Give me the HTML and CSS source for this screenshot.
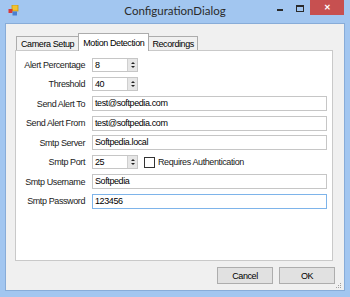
FILE: index.html
```html
<!DOCTYPE html>
<html lang="en">
<head>
    <meta charset="UTF-8">
    <title>ConfigurationDialog</title>
    <link rel="stylesheet" href="styles.css">
</head>
<body>
    <div class="window">
        <div class="titlebar">
            <div class="app-icon">
                <svg width="11" height="11" viewBox="0 0 11 11">
                    <rect x="4" y="0" width="6" height="6" fill="#f2c230" stroke="#c89a10" stroke-width="0.8"/>
                    <rect x="0.5" y="4" width="4" height="4" fill="#d83a3a"/>
                    <rect x="4.5" y="6.5" width="4.5" height="4" fill="#4a7fd0"/>
                </svg>
            </div>
            <div class="title">ConfigurationDialog</div>
            <div class="controls">
                <span class="btn-min"></span>
                <span class="btn-max"></span>
                <span class="btn-close">&#x2715;</span>
            </div>
        </div>

        <div class="client">
            <div class="tabs">
                <div class="tab first">Camera Setup</div>
                <div class="tab active">Motion Detection</div>
                <div class="tab">Recordings</div>
            </div>

            <div class="panel">
                <div class="form">
                    <label>Alert Percentage</label>
                    <div class="spin"><span class="val">8</span><span class="arrows"><i class="up"></i><i class="down"></i></span></div>

                    <label>Threshold</label>
                    <div class="spin"><span class="val">40</span><span class="arrows"><i class="up"></i><i class="down"></i></span></div>

                    <label>Send Alert To</label>
                    <div class="textbox">test@softpedia.com</div>

                    <label>Send Alert From</label>
                    <div class="textbox">test@softpedia.com</div>

                    <label>Smtp Server</label>
                    <div class="textbox">Softpedia.local</div>

                    <label>Smtp Port</label>
                    <div class="port-row">
                        <div class="spin"><span class="val">25</span><span class="arrows"><i class="up"></i><i class="down"></i></span></div>
                        <span class="checkbox"></span>
                        <span class="check-label">Requires Authentication</span>
                    </div>

                    <label>Smtp Username</label>
                    <div class="textbox">Softpedia</div>

                    <label>Smtp Password</label>
                    <div class="textbox focused">123456</div>
                </div>
            </div>

            <div class="buttons">
                <button class="dlg-button">Cancel</button>
                <button class="dlg-button">OK</button>
            </div>

            <svg class="grip" width="6" height="6" viewBox="0 0 6 6">
                <rect x="4" y="0" width="1" height="1" fill="#a0a0a0"/>
                <rect x="2" y="2" width="1" height="1" fill="#a0a0a0"/>
                <rect x="4" y="2" width="1" height="1" fill="#a0a0a0"/>
                <rect x="0" y="4" width="1" height="1" fill="#a0a0a0"/>
                <rect x="2" y="4" width="1" height="1" fill="#a0a0a0"/>
                <rect x="4" y="4" width="1" height="1" fill="#a0a0a0"/>
            </svg>
        </div>
    </div>
</body>
</html>
```

FILE: styles.css
```css
body {
    margin: 0;
    font-family: 'Liberation Sans', Arial, sans-serif;
    font-size: 9px;
    letter-spacing: -0.4px;
    color: #000;
}
.window {
    width: 350px;
    height: 297px;
    background-color: #a2c6f0;
    display: flex;
    flex-direction: column;
    box-sizing: border-box;
}
.titlebar {
    height: 23px;
    display: grid;
    grid-template-columns: 1fr auto 1fr;
    align-items: start;
    flex-shrink: 0;
}
.app-icon {
    padding: 5px 0 0 8px;
    line-height: 0;
}
.title {
    font-family: Lato, sans-serif;
    font-size: 11.5px;
    letter-spacing: 0;
    color: #2b2b2b;
    padding-top: 4px;
}
.controls {
    display: flex;
    justify-content: flex-end;
    align-items: flex-start;
    padding-right: 6px;
}
.btn-min {
    width: 6px;
    height: 2px;
    background-color: #2a2a2a;
    margin: 9px 13px 0 0;
}
.btn-max {
    width: 6px;
    height: 4px;
    border: 1px solid #2a2a2a;
    border-top-width: 2px;
    margin: 5px 6px 0 0;
}
.btn-close {
    width: 34px;
    height: 15px;
    background-color: #c75050;
    color: #fff;
    font-size: 8px;
    font-weight: bold;
    letter-spacing: 0;
    text-align: center;
    line-height: 15px;
}
.client {
    flex: 1;
    margin: 0 5px 6px 5px;
    border: 1px solid #88acd8;
    background-color: #f0f0f0;
    padding: 9px 11px 6px 9px;
    display: flex;
    flex-direction: column;
    position: relative;
}
.tabs {
    display: flex;
    align-items: flex-end;
    height: 17px;
    padding-left: 1px;
}
.tab {
    height: 14px;
    box-sizing: border-box;
    border: 1px solid #acacac;
    border-bottom: none;
    background-color: #f0f0f0;
    padding: 1px 3px 0 3px;
    line-height: 12px;
}
.tab.first {
    border-right: none;
    padding: 1px 4px 0 4px;
}
.tab.active {
    height: 18px;
    background-color: #fff;
    padding: 3px 4px 0 4px;
    margin-bottom: -1px;
    position: relative;
    z-index: 1;
}
.tab.active + .tab {
    border-left: none;
}
.panel {
    flex: 1;
    background-color: #fff;
    border: 1px solid #c9c9c9;
}
.form {
    display: grid;
    grid-template-columns: 69px 1fr;
    grid-auto-rows: 15px;
    column-gap: 7px;
    row-gap: 4.5px;
    align-items: center;
    padding: 6px 5px 0 0;
}
.form label {
    text-align: right;
    color: #1a1a1a;
}
.textbox {
    height: 15px;
    box-sizing: border-box;
    border: 1px solid #c6c6c6;
    padding-left: 2px;
    line-height: 13px;
}
.textbox.focused {
    border-color: #7eb4ea;
}
.spin {
    width: 46px;
    height: 14px;
    box-sizing: border-box;
    border: 1px solid #c6c6c6;
    display: flex;
    line-height: 12px;
}
.spin .val {
    flex: 1;
    padding-left: 2px;
}
.spin .arrows {
    width: 9px;
    background-color: #e6e6e6;
    border-left: 1px solid #cfcfcf;
    display: flex;
    flex-direction: column;
    align-items: center;
    justify-content: center;
    gap: 2px;
}
.spin .up {
    border-left: 2px solid transparent;
    border-right: 2px solid transparent;
    border-bottom: 2px solid #222;
}
.spin .down {
    border-left: 2px solid transparent;
    border-right: 2px solid transparent;
    border-top: 2px solid #222;
}
.port-row {
    display: flex;
    align-items: center;
}
.checkbox {
    width: 9px;
    height: 9px;
    border: 1px solid #333;
    background-color: #fff;
    margin-left: 6px;
}
.check-label {
    margin-left: 3px;
    color: #1a1a1a;
}
.buttons {
    display: flex;
    justify-content: flex-end;
    gap: 6px;
    margin: 6px -2px 0 0;
}
.dlg-button {
    width: 56px;
    height: 17px;
    font-family: 'Liberation Sans', Arial, sans-serif;
    font-size: 9px;
    letter-spacing: -0.4px;
    background-color: #e1e1e1;
    border: 1px solid #adadad;
    padding: 0;
    color: #000;
}
.grip {
    position: absolute;
    right: 2px;
    bottom: 1px;
}
```
